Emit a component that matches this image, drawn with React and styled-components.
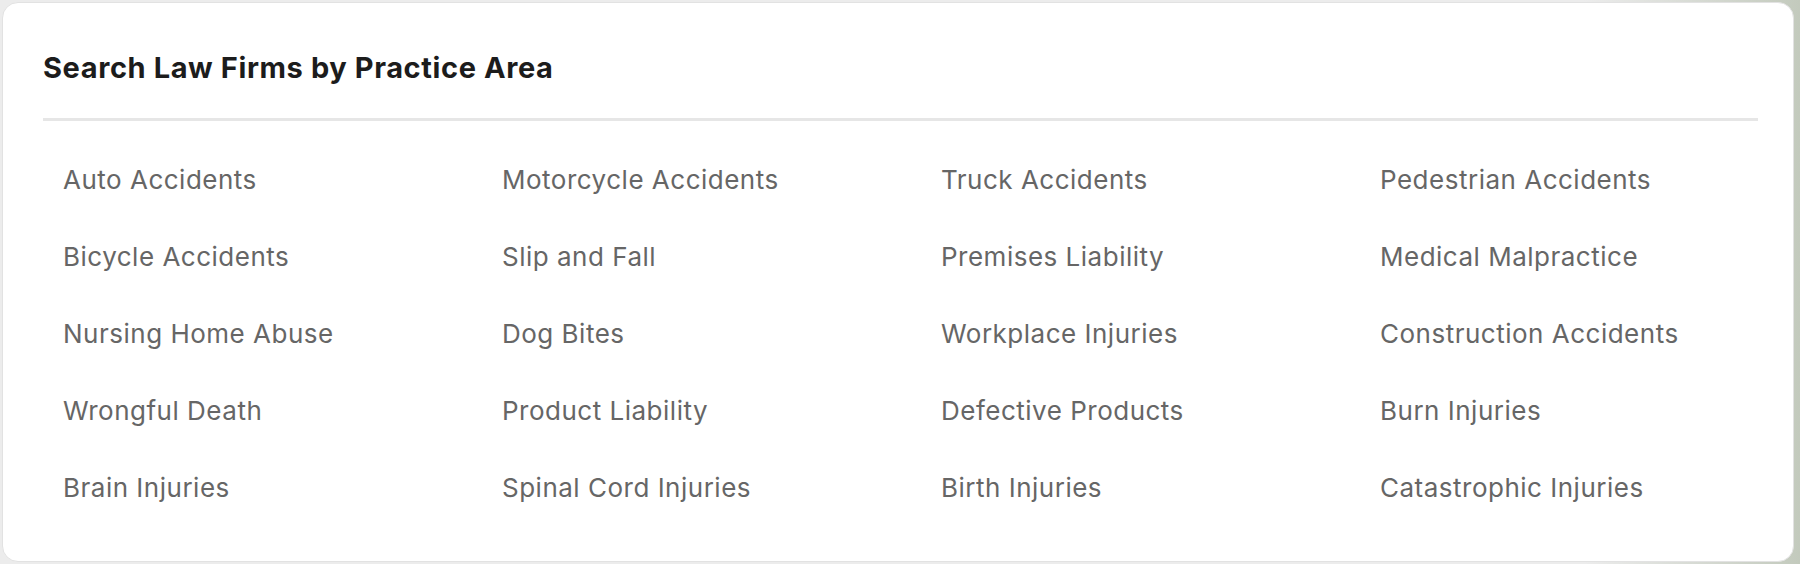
import React from 'react';
import styled, { createGlobalStyle } from 'styled-components';

const practiceAreas = [
  'Auto Accidents',
  'Motorcycle Accidents',
  'Truck Accidents',
  'Pedestrian Accidents',
  'Bicycle Accidents',
  'Slip and Fall',
  'Premises Liability',
  'Medical Malpractice',
  'Nursing Home Abuse',
  'Dog Bites',
  'Workplace Injuries',
  'Construction Accidents',
  'Wrongful Death',
  'Product Liability',
  'Defective Products',
  'Burn Injuries',
  'Brain Injuries',
  'Spinal Cord Injuries',
  'Birth Injuries',
  'Catastrophic Injuries'
];

const GlobalStyle = createGlobalStyle`
  html, body {
    margin: 0;
    padding: 0;
  }

  body {
    background: #ececec;
    font-family: Inter, 'Liberation Sans', sans-serif;
  }
`;

export default function App() {
  return (
    <>
      <GlobalStyle />
      <Page>
        <Card>
          <Heading>Search Law Firms by Practice Area</Heading>
          <Divider />
          <AreaGrid>
            {practiceAreas.map(area => (
              <AreaLink href="#" key={area}>
                {area}
              </AreaLink>
            ))}
          </AreaGrid>
        </Card>
      </Page>
    </>
  );
}

// Page
const Page = styled.div`
  height: 564px;
  padding: 2px 6px 2px 2px;
  box-sizing: border-box;

  background: linear-gradient(
      to right,
      #ececec 0%,
      #ececec 88%,
      #c3cabd 100%
    );
`;

// Card
const Card = styled.section`
  height: 100%;
  box-sizing: border-box;
  padding: 0 35px 0 40px;

  background: #ffffff;
  border: 1px solid #e2e2e2;
  border-radius: 16px;
`;

const Heading = styled.h2`
  margin: 0;
  padding-top: 46px;

  font-size: 29px;
  line-height: 38px;
  font-weight: 700;
  letter-spacing: 0.6px;
  color: #1c1c1c;
`;

const Divider = styled.hr`
  margin: 31px 0 0;
  height: 3px;

  border: none;
  background: #e6e6e6;
`;

// Grid of practice areas
const AreaGrid = styled.div`
  margin-top: 20px;
  padding-left: 20px;

  display: grid;
  grid-template-columns: repeat(3, 439px) 1fr;
  grid-auto-rows: 77px;
  align-items: center;
`;

const AreaLink = styled.a`
  font-size: 26px;
  line-height: 32px;
  letter-spacing: 0.5px;
  color: #666666;
  text-decoration: none;

  :hover {
    text-decoration: underline;
  }
`;
